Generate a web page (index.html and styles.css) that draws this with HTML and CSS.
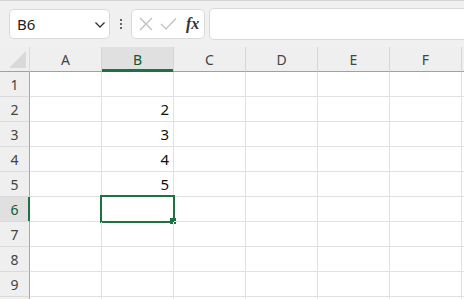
FILE: index.html
```html
<!DOCTYPE html>
<html lang="ja">
<head>
  <meta charset="UTF-8" />
  <title>Book1 - Excel</title>
  <link rel="stylesheet" href="styles.css">
</head>
<body>
  <div class="toolbar">
    <div class="name-box">
      <span>B6</span>
      <svg class="chevron" width="12" height="8" viewBox="0 0 12 8"><path d="M1.5 1.5 L6 6 L10.5 1.5" fill="none" stroke="#333" stroke-width="1.3"/></svg>
    </div>
    <div class="grip"><i></i><i></i><i></i></div>
    <div class="fx-box">
      <svg width="14" height="14" viewBox="0 0 14 14"><path d="M1 1 L13 13 M13 1 L1 13" stroke="#bdbdbd" stroke-width="1.2" fill="none"/></svg>
      <svg width="17" height="14" viewBox="0 0 17 14"><path d="M1 7 L6 12 L16 1.5" stroke="#bdbdbd" stroke-width="1.2" fill="none"/></svg>
      <span class="fx">fx</span>
    </div>
    <div class="formula"></div>
  </div>

  <div class="sheet">
    <div class="row head">
      <div class="rh corner"><span class="tri"></span></div>
      <div class="ch">A</div>
      <div class="ch sel">B</div>
      <div class="ch">C</div>
      <div class="ch">D</div>
      <div class="ch">E</div>
      <div class="ch">F</div>
      <div class="ch"></div>
    </div>
    <div class="row"><div class="rh">1</div><div class="c"></div><div class="c"></div><div class="c"></div><div class="c"></div><div class="c"></div><div class="c"></div><div class="c"></div></div>
    <div class="row"><div class="rh">2</div><div class="c"></div><div class="c">2</div><div class="c"></div><div class="c"></div><div class="c"></div><div class="c"></div><div class="c"></div></div>
    <div class="row"><div class="rh">3</div><div class="c"></div><div class="c">3</div><div class="c"></div><div class="c"></div><div class="c"></div><div class="c"></div><div class="c"></div></div>
    <div class="row"><div class="rh">4</div><div class="c"></div><div class="c">4</div><div class="c"></div><div class="c"></div><div class="c"></div><div class="c"></div><div class="c"></div></div>
    <div class="row"><div class="rh">5</div><div class="c"></div><div class="c">5</div><div class="c"></div><div class="c"></div><div class="c"></div><div class="c"></div><div class="c"></div></div>
    <div class="row"><div class="rh sel">6</div><div class="c"></div><div class="c active"><span class="cursor"><span class="handle"></span></span></div><div class="c"></div><div class="c"></div><div class="c"></div><div class="c"></div><div class="c"></div></div>
    <div class="row"><div class="rh">7</div><div class="c"></div><div class="c"></div><div class="c"></div><div class="c"></div><div class="c"></div><div class="c"></div><div class="c"></div></div>
    <div class="row"><div class="rh">8</div><div class="c"></div><div class="c"></div><div class="c"></div><div class="c"></div><div class="c"></div><div class="c"></div><div class="c"></div></div>
    <div class="row"><div class="rh">9</div><div class="c"></div><div class="c"></div><div class="c"></div><div class="c"></div><div class="c"></div><div class="c"></div><div class="c"></div></div>
    <div class="row"><div class="rh"></div><div class="c"></div><div class="c"></div><div class="c"></div><div class="c"></div><div class="c"></div><div class="c"></div><div class="c"></div></div>
  </div>
</body>
</html>
```

FILE: styles.css
```css
body {
  margin: 0;
  background: #f0f0f0;
  font-family: "Noto Sans", "Noto Sans CJK JP", sans-serif;
  overflow: hidden;
  width: 464px;
  height: 299px;
}

.toolbar {
  display: flex;
  align-items: center;
  height: 47px;
  border-top: 1px solid #d3d3d3;
  padding-left: 9px;
  box-sizing: border-box;
  overflow: hidden;
}

.name-box {
  flex: none;
  width: 101px;
  height: 30px;
  box-sizing: border-box;
  background: #fff;
  border: 1px solid #d9d9d9;
  border-radius: 5px;
  display: flex;
  align-items: center;
  justify-content: space-between;
  padding: 0 3px 0 7px;
  font-size: 15px;
  color: #222;
}

.chevron {
  margin-top: 1px;
}

.grip {
  flex: none;
  width: 21px;
  display: flex;
  flex-direction: column;
  align-items: center;
  gap: 2px;
}

.grip i {
  width: 2px;
  height: 2px;
  background: #666;
}

.fx-box {
  flex: none;
  width: 74px;
  height: 30px;
  box-sizing: border-box;
  background: #fff;
  border: 1px solid #d9d9d9;
  border-radius: 5px;
  display: flex;
  align-items: center;
  gap: 7px;
  padding-left: 7px;
}

.fx {
  font-family: "Liberation Serif", serif;
  font-style: italic;
  font-weight: bold;
  font-size: 16px;
  color: #333;
  margin-left: 2px;
}

.formula {
  flex: none;
  width: 270px;
  margin-left: 4px;
  height: 30px;
  background: #fff;
  border: 1px solid #d9d9d9;
  border-radius: 5px;
}

.sheet {
  background: #fff;
  height: 252px;
  overflow: hidden;
}

.row {
  display: flex;
  height: 25px;
}

.rh {
  flex: none;
  width: 29px;
  border-right: 1px solid #a6a6a6;
  border-bottom: 1px solid #dadada;
  background: #efefef;
  color: #444;
  font-size: 14px;
  display: flex;
  align-items: center;
  justify-content: center;
}

.rh.sel {
  background: #e0e0e0;
  color: #0f5a30;
  border-right-color: #1e7145;
  box-shadow: inset -1px 0 0 #1e7145;
}

.c {
  flex: none;
  width: 72px;
  box-sizing: border-box;
  border-right: 1px solid #e1e1e1;
  border-bottom: 1px solid #e1e1e1;
  font-size: 15px;
  color: #111;
  text-align: right;
  padding-right: 4px;
  line-height: 24px;
  position: relative;
}

.head .rh,
.ch {
  border-bottom: 1px solid #a0a0a0;
}

.ch {
  flex: none;
  width: 72px;
  box-sizing: border-box;
  background: #efefef;
  border-right: 1px solid #d6d6d6;
  color: #444;
  font-size: 14px;
  display: flex;
  align-items: center;
  justify-content: center;
}

.ch.sel {
  background: #e0e0e0;
  color: #0f5a30;
  border-bottom-color: #1e7145;
  box-shadow: inset 0 -2px 0 #1e7145;
}

.corner {
  position: relative;
  border-right-color: #dadada;
}

.tri {
  position: absolute;
  right: 3px;
  bottom: 3px;
  width: 0;
  height: 0;
  border-left: 17px solid transparent;
  border-bottom: 17px solid #d9d9d9;
}

.cursor {
  position: absolute;
  top: -2px;
  left: -2px;
  width: 75px;
  height: 28px;
  box-sizing: border-box;
  border: 2px solid #1e7145;
}

.handle {
  position: absolute;
  right: -4px;
  bottom: -4px;
  width: 6px;
  height: 6px;
  background: #1e7145;
  border: 1px solid #fff;
  border-left: none;
  border-top: none;
}
```
